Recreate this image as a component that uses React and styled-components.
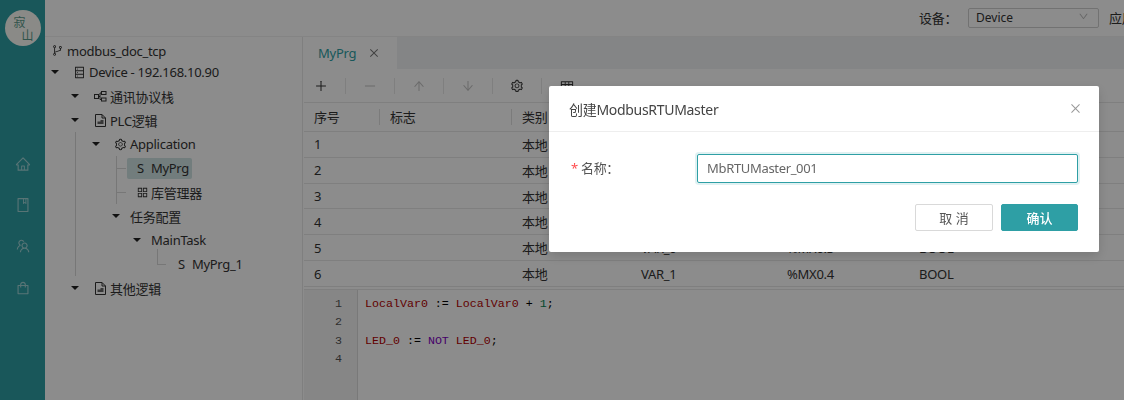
import React from "react";
import styled, { createGlobalStyle } from "styled-components";
import {
  AiOutlineAppstore,
  AiOutlineArrowDown,
  AiOutlineArrowUp,
  AiOutlineBook,
  AiOutlineBranches,
  AiOutlineClose,
  AiOutlineDatabase,
  AiOutlineDown,
  AiOutlineHome,
  AiOutlineMinus,
  AiOutlinePlus,
  AiOutlineSetting,
  AiOutlineShopping,
  AiOutlineTable,
  AiOutlineTeam,
} from "react-icons/ai";

const GlobalStyle = createGlobalStyle`
  html, body {
    margin: 0;
    padding: 0;
    overflow: hidden;
    background: #fff;
  }
  body {
    font-family: "Noto Sans", "Noto Sans CJK SC", sans-serif;
    font-size: 13px;
    letter-spacing: -0.27px;
    color: #333;
  }
  * {
    box-sizing: border-box;
  }
`;

const Page = styled.div`
  display: flex;
  width: 1124px;
  height: 400px;
  overflow: hidden;
`;

const Rail = styled.nav`
  flex: 0 0 45px;
  display: flex;
  flex-direction: column;
  align-items: center;
  padding-top: 10px;
  background: #2e9fa5;
`;

const Logo = styled.div`
  width: 36px;
  height: 36px;
  margin-bottom: 97px;
  padding: 5px 7px 0 9px;
  display: flex;
  flex-direction: column;
  border-radius: 50%;
  background: #fcfcf6;
  color: #5a9a8a;
  font-size: 12px;
  line-height: 13px;
  letter-spacing: 0;
  font-family: "Noto Sans CJK SC", sans-serif;
`;

const LogoChar = styled.span`
  align-self: ${(p) => (p.$end ? "flex-end" : "flex-start")};
`;

const RailIcon = styled.div`
  height: 41.3px;
  display: flex;
  align-items: center;
  justify-content: center;
  color: rgba(255, 255, 255, 0.55);
  font-size: 16px;
`;

const Content = styled.div`
  flex: 1;
  min-width: 0;
  display: flex;
  flex-direction: column;
`;

const TopBar = styled.header`
  flex: 0 0 37px;
  display: flex;
  align-items: center;
  padding: 0 0 1px 874px;
  border-bottom: 1px solid #f0f0f0;
  white-space: nowrap;
  overflow: hidden;
`;

const TopLabel = styled.span`
  width: 49px;
  flex: none;
`;

const Select = styled.div`
  flex: 0 0 131px;
  height: 20px;
  margin-right: 10px;
  padding: 0 9px 0 7px;
  display: flex;
  align-items: center;
  justify-content: space-between;
  border: 1px solid #d0d0d0;
  border-radius: 2px;
  font-size: 12px;
  letter-spacing: 0;

  svg {
    color: #bbb;
    font-size: 11px;
    margin-bottom: 3px;
  }
`;

const Body = styled.div`
  flex: 1;
  min-height: 0;
  display: flex;
`;

const Tree = styled.aside`
  flex: 0 0 258px;
  padding-top: 4px;
  border-right: 1px solid #e8e8e8;
`;

const TreeRow = styled.div`
  display: flex;
  align-items: center;
  height: ${(p) => p.$height || 24}px;
  padding-left: ${(p) => p.$indent || 0}px;
  white-space: nowrap;
`;

const Guide = styled.div`
  margin-left: ${(p) => p.$left}px;
  border-left: 1px solid #d9d9d9;
`;

const Caret = styled.span`
  flex: none;
  width: 10px;
  margin-right: ${(p) => p.$gap}px;
  display: flex;
  justify-content: center;

  &::before {
    content: "";
    border-left: 4px solid transparent;
    border-right: 4px solid transparent;
    border-top: 4px solid #222;
  }
`;

const NodeIcon = styled.span`
  flex: none;
  display: flex;
  margin-left: ${(p) => p.$left || 0}px;
  margin-right: ${(p) => p.$gap ?? 3}px;
  font-size: 13px;
  color: #333;
`;

const Tick = styled.span`
  flex: none;
  width: 9px;
  height: 1px;
  background: #d9d9d9;
`;

const Elbow = styled.span`
  flex: none;
  width: 9px;
  height: 16px;
  margin-top: -15px;
  margin-right: 12px;
  border-left: 1px solid #d9d9d9;
  border-bottom: 1px solid #d9d9d9;
`;

const Pou = styled.span`
  display: flex;
  gap: 7px;
  align-items: center;
`;

const Selected = styled(Pou)`
  height: 21px;
  margin-left: 1px;
  padding: 0 3px 0 10px;
  border-radius: 2px;
  background: #cfe3e3;
`;

const Main = styled.main`
  flex: 1;
  min-width: 0;
  display: flex;
  flex-direction: column;
  padding-left: 1px;
`;

const TabBar = styled.div`
  flex: 0 0 32px;
  display: flex;
  background: #f0f2f5;
`;

const Tab = styled.div`
  flex: 0 0 93px;
  display: flex;
  align-items: center;
  gap: 12px;
  padding-left: 14px;
  background: #fff;
  color: #2e9fa5;

  svg {
    color: #777;
    font-size: 12px;
  }
`;

const Toolbar = styled.div`
  flex: 0 0 34px;
  display: flex;
  align-items: center;
  border-bottom: 1px solid #e8e8e8;
`;

const ToolButton = styled.span`
  flex: 0 0 49px;
  height: 16px;
  display: flex;
  align-items: center;
  justify-content: center;
  border-right: 1px solid #e8e8e8;
  font-size: 14px;
  color: ${(p) => (p.$off ? "#c4c4c4" : "#333")};

  &:first-child {
    flex-basis: 42px;
    padding-right: 8px;
  }

  &:last-child {
    border-right: 0;
  }
`;

const Cols = styled.div`
  display: grid;
  grid-template-columns: 76px 132px 119px 146px 132px 1fr;
  align-items: center;
  height: ${(p) => p.$height}px;
  border-bottom: 1px solid #e8e8e8;
`;

const HeadCell = styled.div`
  height: 16px;
  line-height: 16px;
  padding-left: 10px;
  border-right: 1px solid #e0e0e0;

  &:last-child {
    border-right: 0;
  }
`;

const Cell = styled.div`
  padding-left: 10px;
`;

const Editor = styled.div`
  flex: 1;
  min-height: 0;
  display: flex;
  margin-top: 2px;
  border-top: 1px solid #e8e8e8;
  font-family: "Liberation Mono", monospace;
  font-size: 11.65px;
  letter-spacing: 0;
  line-height: 18.4px;
`;

const Gutter = styled.div`
  flex: 0 0 54px;
  padding: 5px 15px 0 0;
  text-align: right;
  background: #f5f5f5;
  border-right: 1px solid #ddd;
  color: #555;
`;

const Code = styled.div`
  padding: 5px 0 0 7px;
  color: #000;
`;

const CodeLine = styled.div`
  height: 18.4px;
  white-space: pre;
`;

const Var = styled.span`
  color: #b30000;
`;

const Keyword = styled.span`
  color: #8000c0;
`;

const Num = styled.span`
  color: #098658;
`;

const Mask = styled.div`
  position: fixed;
  inset: 0;
  padding: 86px 0 0 549px;
  background: rgba(0, 0, 0, 0.45);
`;

const Dialog = styled.section`
  width: 550px;
  height: 166px;
  background: #fff;
  border-radius: 2px;
  box-shadow: 0 4px 12px rgba(0, 0, 0, 0.15);
`;

const DialogHead = styled.div`
  height: 46px;
  display: flex;
  align-items: center;
  justify-content: space-between;
  padding: 0 17px 0 20px;
  border-bottom: 1px solid #eee;
  color: #444;
  font-size: 14px;
  letter-spacing: -0.3px;

  svg {
    color: #999;
    font-size: 13px;
  }
`;

const FormRow = styled.div`
  display: flex;
  align-items: center;
  height: 29px;
  margin: 22px 21px 0 22px;
`;

const FieldLabel = styled.label`
  flex: 0 0 126px;
  margin-bottom: 2px;
  color: #555;

  &::before {
    content: "*";
    margin-right: 3px;
    color: #ff4d4f;
  }
`;

const Input = styled.input`
  flex: 1;
  min-width: 0;
  height: 29px;
  padding: 0 9px 2px;
  border: 1px solid #2e9fa5;
  border-radius: 2px;
  outline: none;
  box-shadow: 0 0 0 2px rgba(46, 159, 165, 0.15);
  font: inherit;
  letter-spacing: -0.33px;
  color: #666;
`;

const Actions = styled.div`
  display: flex;
  justify-content: flex-end;
  gap: 8px;
  margin: 21px 21px 0 0;
`;

const Button = styled.button`
  width: ${(p) => p.$width}px;
  height: 27px;
  padding: 0;
  border: 1px solid ${(p) => (p.$primary ? "#2e9fa5" : "#d9d9d9")};
  border-radius: 2px;
  background: ${(p) => (p.$primary ? "#2e9fa5" : "#fff")};
  color: ${(p) => (p.$primary ? "#fff" : "#555")};
  font: inherit;
  font-weight: ${(p) => (p.$primary ? 500 : 400)};
`;

const FileIcon = () => (
  <svg width="11" height="13" viewBox="0 0 11 13" fill="none" stroke="#333">
    <path d="M.5.5h6.5l3.5 3.5v8.500h-10z" />
    <path d="M7 .5v3.500h3.500" />
    <path d="M2.500 7.500h3v-1.500h3v4h-6z" fill="#666" stroke="none" />
  </svg>
);

const StackIcon = () => (
  <svg width="13" height="11" viewBox="0 0 13 11" fill="none" stroke="#333">
    <rect x=".5" y="3.500" width="4" height="4" />
    <rect x="7.500" y=".5" width="4.500" height="3" />
    <rect x="7.500" y="7" width="4.500" height="3" />
    <path d="M4.500 5.500h1.500v-3.500h1.500M6 5.500v3h1.500" />
  </svg>
);

const rows = [
  { no: 1, name: "LocalVar0", addr: "", type: "INT" },
  { no: 2, name: "LED_0", addr: "%QX0.0", type: "BOOL" },
  { no: 3, name: "LED_1", addr: "%QX0.1", type: "BOOL" },
  { no: 4, name: "LED_2", addr: "%QX0.2", type: "BOOL" },
  { no: 5, name: "VAR_0", addr: "%MX0.3", type: "BOOL" },
  { no: 6, name: "VAR_1", addr: "%MX0.4", type: "BOOL" },
];

export default function App() {
  return (
    <Page>
      <GlobalStyle />
      <Rail>
        <Logo>
          <LogoChar>寂</LogoChar>
          <LogoChar $end>山</LogoChar>
        </Logo>
        <RailIcon><AiOutlineHome /></RailIcon>
        <RailIcon><AiOutlineBook /></RailIcon>
        <RailIcon><AiOutlineTeam /></RailIcon>
        <RailIcon><AiOutlineShopping /></RailIcon>
      </Rail>
      <Content>
        <TopBar>
          <TopLabel>设备：</TopLabel>
          <Select>
            Device
            <AiOutlineDown />
          </Select>
          <span>应用程序</span>
        </TopBar>
        <Body>
          <Tree>
            <TreeRow $height={19} $indent={6}>
              <NodeIcon><AiOutlineBranches /></NodeIcon>
              modbus_doc_tcp
            </TreeRow>
            <TreeRow $indent={5}>
              <Caret $gap={13} />
              <NodeIcon><AiOutlineDatabase /></NodeIcon>
              Device - 192.168.10.90
            </TreeRow>
            <TreeRow $indent={25}>
              <Caret $gap={14} />
              <NodeIcon><StackIcon /></NodeIcon>
              通讯协议栈
            </TreeRow>
            <TreeRow $indent={25}>
              <Caret $gap={15} />
              <NodeIcon $gap={4}><FileIcon /></NodeIcon>
              PLC逻辑
            </TreeRow>
            <Guide $left={30}>
              <TreeRow $indent={15}>
                <Caret $gap={13} />
                <NodeIcon><AiOutlineSetting /></NodeIcon>
                Application
              </TreeRow>
              <Guide $left={40}>
                <TreeRow>
                  <Tick />
                  <Selected><span>S</span><span>MyPrg</span></Selected>
                </TreeRow>
                <TreeRow>
                  <Tick />
                  <NodeIcon $left={10} $gap={2}><AiOutlineAppstore /></NodeIcon>
                  库管理器
                </TreeRow>
              </Guide>
              <TreeRow $indent={35}>
                <Caret $gap={9} />
                任务配置
              </TreeRow>
              <TreeRow $indent={56}>
                <Caret $gap={9} />
                MainTask
              </TreeRow>
              <TreeRow $indent={81}>
                <Elbow />
                <Pou><span>S</span><span>MyPrg_1</span></Pou>
              </TreeRow>
            </Guide>
            <TreeRow $indent={25}>
              <Caret $gap={15} />
              <NodeIcon $gap={4}><FileIcon /></NodeIcon>
              其他逻辑
            </TreeRow>
          </Tree>
          <Main>
            <TabBar>
              <Tab>
                MyPrg
                <AiOutlineClose />
              </Tab>
            </TabBar>
            <Toolbar>
              <ToolButton><AiOutlinePlus /></ToolButton>
              <ToolButton $off><AiOutlineMinus /></ToolButton>
              <ToolButton $off><AiOutlineArrowUp /></ToolButton>
              <ToolButton $off><AiOutlineArrowDown /></ToolButton>
              <ToolButton><AiOutlineSetting /></ToolButton>
              <ToolButton><AiOutlineTable /></ToolButton>
            </Toolbar>
            <Cols $height={29}>
              <HeadCell>序号</HeadCell>
              <HeadCell>标志</HeadCell>
              <HeadCell>类别</HeadCell>
              <HeadCell>名称</HeadCell>
              <HeadCell>地址</HeadCell>
              <HeadCell>类型</HeadCell>
            </Cols>
            {rows.map((r) => (
              <Cols key={r.no} $height={25.83}>
                <Cell>{r.no}</Cell>
                <Cell />
                <Cell>本地</Cell>
                <Cell>{r.name}</Cell>
                <Cell>{r.addr}</Cell>
                <Cell>{r.type}</Cell>
              </Cols>
            ))}
            <Editor>
              <Gutter>
                <div>1</div>
                <div>2</div>
                <div>3</div>
                <div>4</div>
              </Gutter>
              <Code>
                <CodeLine><Var>LocalVar0</Var> := <Var>LocalVar0</Var> + <Num>1</Num>;</CodeLine>
                <CodeLine />
                <CodeLine><Var>LED_0</Var> := <Keyword>NOT</Keyword> <Var>LED_0</Var>;</CodeLine>
                <CodeLine />
              </Code>
            </Editor>
          </Main>
        </Body>
      </Content>
      <Mask>
        <Dialog>
          <DialogHead>
            创建ModbusRTUMaster
            <AiOutlineClose />
          </DialogHead>
          <FormRow>
            <FieldLabel>名称：</FieldLabel>
            <Input defaultValue="MbRTUMaster_001" />
          </FormRow>
          <Actions>
            <Button $width={78}>取 消</Button>
            <Button $width={77} $primary>确认</Button>
          </Actions>
        </Dialog>
      </Mask>
    </Page>
  );
}
